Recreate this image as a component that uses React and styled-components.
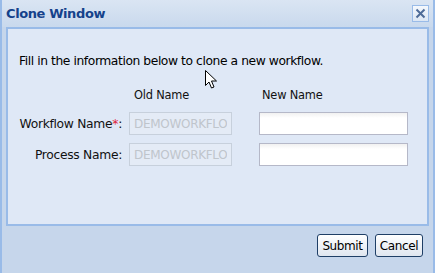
import styled, { createGlobalStyle } from "styled-components";

const Global = createGlobalStyle`
  html, body { margin: 0; padding: 0; background: #c9d8ec; }
  body { font-family: Tahoma, "DejaVu Sans", Verdana, sans-serif; }
`;

const Window = styled.div`
  width: 435px;
  height: 273px;
  box-sizing: border-box;
  border-left: 2px solid #99bbe8;
  border-right: 2px solid #99bbe8;
  background: #c6d6eb;
  display: flex;
  flex-direction: column;
`;

const Header = styled.div`
  height: 27px;
  display: flex;
  align-items: center;
  justify-content: space-between;
  padding: 0 4px 0 4px;
  background: linear-gradient(#dae5f3, #c9d9ed);
`;

const Title = styled.div`
  font: bold 13px "DejaVu Sans", sans-serif;
  letter-spacing: -0.4px;
  color: #15428b;
`;

const CloseBtn = styled.div`
  width: 15px;
  height: 15px;
  border: 1px solid #99bbe8;
  background: linear-gradient(#f4f8fd, #dbe6f4);
  display: flex;
  align-items: center;
  justify-content: center;
  margin-top: -1px;
`;

const Body = styled.div`
  margin: 0 4px;
  height: 199px;
  box-sizing: border-box;
  border: 2px solid #99bbe8;
  background: #dfe8f6;
  padding: 25px 0 0 11px;
  font: 12px "DejaVu Sans", sans-serif;
  color: #000;
`;

const Intro = styled.div`
  font-size: 12.3px;
  letter-spacing: -0.42px;
`;

const Grid = styled.div`
  display: grid;
  grid-template-columns: 110px 103px 27px 149px;
  grid-template-rows: 20px 31px 31px;
  margin-top: 20px;
  font-size: 11.4px;
  letter-spacing: -0.2px;
  color: #111;
`;

const ColHead = styled.div`
  grid-column: ${(p) => p.col};
  padding-left: ${(p) => p.pad}px;
  align-self: start;
`;

const Label = styled.div`
  grid-column: 1;
  text-align: right;
  padding-right: 7px;
  align-self: center;
  font-size: 12.3px;
  letter-spacing: -0.3px;
  .req { color: #e0233a; }
`;

const Field = styled.input`
  grid-column: ${(p) => p.col};
  box-sizing: border-box;
  width: ${(p) => p.w}px;
  height: 23px;
  align-self: center;
  border: 1px solid ${(p) => (p.disabled ? "#c7d0dc" : "#b5b8c8")};
  background: ${(p) => (p.disabled ? "#e4ebf6" : "linear-gradient(#f1f1f1, #fff 5px)")};
  font: 12px "DejaVu Sans", sans-serif;
  color: #bfc5cc;
  padding: 0 4px;
  outline: none;
  letter-spacing: -0.3px;
`;

const Footer = styled.div`
  display: flex;
  justify-content: flex-end;
  gap: 7px;
  padding: 8px 10px 0 0;
`;

const Button = styled.button`
  height: 23px;
  box-sizing: border-box;
  padding: 0 3px;
  border: 1px solid #1f3f66;
  border-radius: 3px;
  background: linear-gradient(#ffffff, #dfe6ef);
  font: 12px "DejaVu Sans", sans-serif;
  letter-spacing: -0.4px;
  color: #000;
  width: ${(p) => p.w}px;
`;

const Cursor = styled.svg`
  position: absolute;
  left: 205px;
  top: 70px;
`;

export default function App() {
  return (
    <>
      <Global />
      <Window>
        <Header>
          <Title>Clone Window</Title>
          <CloseBtn>
            <svg width="11" height="11" viewBox="0 0 11 11">
              <path d="M1.5 1.5 L9.5 9.5 M9.5 1.5 L1.5 9.5" stroke="#4d6b98" strokeWidth="2" />
            </svg>
          </CloseBtn>
        </Header>
        <Body>
          <Intro>Fill in the information below to clone a new workflow.</Intro>
          <Grid>
            <ColHead col={2} pad={5}>Old Name</ColHead>
            <ColHead col={4} pad={3}>New Name</ColHead>
            <Label>Workflow Name<span className="req">*</span>:</Label>
            <Field col={2} w={103} disabled defaultValue="DEMOWORKFLOW" />
            <Field col={4} w={149} />
            <Label>Process Name:</Label>
            <Field col={2} w={103} disabled defaultValue="DEMOWORKFLOW" />
            <Field col={4} w={149} />
          </Grid>
        </Body>
        <Footer>
          <Button w={51}>Submit</Button>
          <Button w={48}>Cancel</Button>
        </Footer>
      </Window>
      <Cursor width="14" height="20" viewBox="0 0 14 20">
        <path d="M0.5 0.5 L0.5 15.5 L4 12 L6.5 18 L9 17 L6.5 11 L11.5 11 Z" fill="#fff" stroke="#000" strokeWidth="1" />
      </Cursor>
    </>
  );
}
